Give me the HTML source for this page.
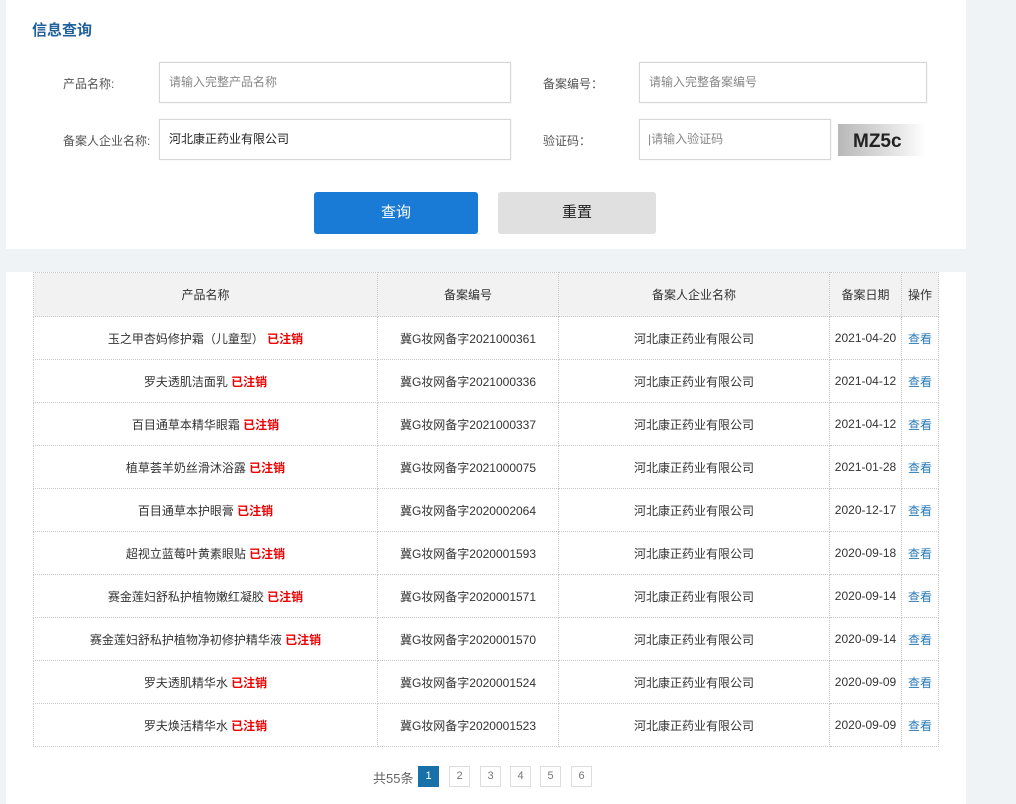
<!DOCTYPE html>
<html><head><meta charset="utf-8"><style>
*{margin:0;padding:0;box-sizing:border-box}
body{width:1016px;height:804px;background:#f0f3f6;font-family:"Liberation Sans","Noto Sans CJK SC",sans-serif;font-size:12px;color:#333;position:relative;overflow:hidden}
.p1{position:absolute;left:6px;top:0;width:960px;height:249px;background:#fff}
.p2{position:absolute;left:6px;top:272px;width:960px;height:532px;background:#fff}
.a{position:absolute}
.title{left:32px;top:19px;font-size:15px;font-weight:bold;color:#1f5f9a}
.lbl{color:#555;font-size:12px}
.inp{border:1px solid #d6d6d6;background:#fff;height:41px;line-height:39px;padding-left:9px;color:#888;font-size:12px;box-shadow:0 0 2px rgba(0,0,0,.08)}
.btn{height:42px;line-height:42px;text-align:center;font-size:15px;border-radius:3px}
table{position:absolute;left:33px;top:272px;width:906px;border-collapse:collapse;border:1px dotted #9fb5d8;table-layout:fixed}
td,th{border:1px dotted #c8c8c8;text-align:center;font-weight:normal;font-size:12px;color:#333;height:43px;padding:0;white-space:nowrap;vertical-align:middle}
th{background:#f2f2f2;height:44px}
.r{color:#e00;font-weight:bold}
.v{color:#2a7ab8}
.pg{position:absolute;top:766px;width:21px;height:21px;border:1px solid #ddd;text-align:center;line-height:19px;color:#777;font-size:11px;background:#fff}
</style></head><body>
<div class="p1"></div><div class="p2"></div>
<div class="a title">信息查询</div>
<div class="a lbl" style="left:63px;top:75px">产品名称:</div>
<div class="a inp" style="left:159px;top:62px;width:352px">请输入完整产品名称</div>
<div class="a lbl" style="left:63px;top:132px">备案人企业名称:</div>
<div class="a inp" style="left:159px;top:119px;width:352px;color:#222">河北康正药业有限公司</div>
<div class="a lbl" style="left:543px;top:75px">备案编号：</div>
<div class="a inp" style="left:639px;top:62px;width:288px">请输入完整备案编号</div>
<div class="a lbl" style="left:543px;top:132px">验证码：</div>
<div class="a inp" style="left:639px;top:119px;width:192px;padding-left:8px">|请输入验证码</div>
<div class="a" style="left:838px;top:124px;width:88px;height:32px;background:linear-gradient(90deg,#b8b8b8,#e8e8e8 70%,#fff);font:bold 19px 'Liberation Sans Narrow','Liberation Sans',sans-serif;color:#222;line-height:36px;padding-left:15px;letter-spacing:0">MZ5c</div>
<div class="a btn" style="left:314px;top:192px;width:164px;background:#1a7bd6;color:#fff">查询</div>
<div class="a btn" style="left:498px;top:192px;width:158px;background:#e0e0e0;color:#222">重置</div>
<table>
<colgroup><col style="width:344px"><col style="width:181px"><col style="width:271px"><col style="width:72px"><col></colgroup>
<tr><th>产品名称</th><th>备案编号</th><th>备案人企业名称</th><th>备案日期</th><th>操作</th></tr>
<tr><td>玉之甲杏妈修护霜（儿童型） <span class="r">已注销</span></td><td>冀G妆网备字2021000361</td><td>河北康正药业有限公司</td><td>2021-04-20</td><td class="v">查看</td></tr>
<tr><td>罗夫透肌洁面乳 <span class="r">已注销</span></td><td>冀G妆网备字2021000336</td><td>河北康正药业有限公司</td><td>2021-04-12</td><td class="v">查看</td></tr>
<tr><td>百目通草本精华眼霜 <span class="r">已注销</span></td><td>冀G妆网备字2021000337</td><td>河北康正药业有限公司</td><td>2021-04-12</td><td class="v">查看</td></tr>
<tr><td>植草荟羊奶丝滑沐浴露 <span class="r">已注销</span></td><td>冀G妆网备字2021000075</td><td>河北康正药业有限公司</td><td>2021-01-28</td><td class="v">查看</td></tr>
<tr><td>百目通草本护眼膏 <span class="r">已注销</span></td><td>冀G妆网备字2020002064</td><td>河北康正药业有限公司</td><td>2020-12-17</td><td class="v">查看</td></tr>
<tr><td>超视立蓝莓叶黄素眼贴 <span class="r">已注销</span></td><td>冀G妆网备字2020001593</td><td>河北康正药业有限公司</td><td>2020-09-18</td><td class="v">查看</td></tr>
<tr><td>赛金莲妇舒私护植物嫩红凝胶 <span class="r">已注销</span></td><td>冀G妆网备字2020001571</td><td>河北康正药业有限公司</td><td>2020-09-14</td><td class="v">查看</td></tr>
<tr><td>赛金莲妇舒私护植物净初修护精华液 <span class="r">已注销</span></td><td>冀G妆网备字2020001570</td><td>河北康正药业有限公司</td><td>2020-09-14</td><td class="v">查看</td></tr>
<tr><td>罗夫透肌精华水 <span class="r">已注销</span></td><td>冀G妆网备字2020001524</td><td>河北康正药业有限公司</td><td>2020-09-09</td><td class="v">查看</td></tr>
<tr><td>罗夫焕活精华水 <span class="r">已注销</span></td><td>冀G妆网备字2020001523</td><td>河北康正药业有限公司</td><td>2020-09-09</td><td class="v">查看</td></tr>
</table>
<div class="a" style="left:373px;top:768px;font-size:13px;color:#666">共55条</div>
<div class="pg" style="left:418px;background:#1770a8;color:#fff;border-color:#1770a8">1</div>
<div class="pg" style="left:449px">2</div>
<div class="pg" style="left:480px">3</div>
<div class="pg" style="left:510px">4</div>
<div class="pg" style="left:540px">5</div>
<div class="pg" style="left:571px">6</div>
</body></html>
